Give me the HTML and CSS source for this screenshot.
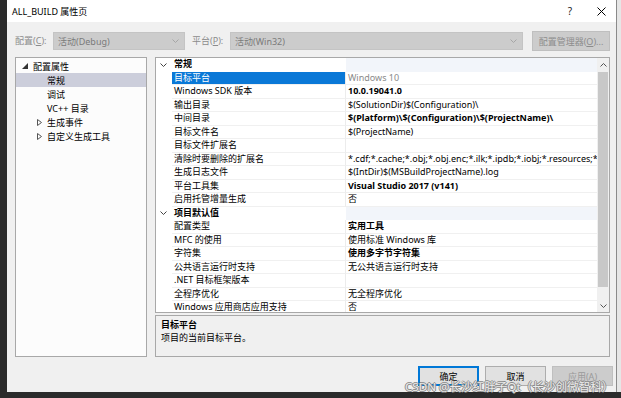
FILE: index.html
```html
<!DOCTYPE html>
<html lang="zh-CN">
<head>
  <meta charset="UTF-8">
  <title>ALL_BUILD 属性页</title>
  <link rel="stylesheet" href="styles.css">
</head>
<body>
  <div class="screen">
    <div class="dialog">
      <!-- title bar -->
      <div class="titlebar">
        <span class="title">ALL_BUILD 属性页</span>
        <span class="help">?</span>
        <svg class="close" width="9" height="9" viewBox="0 0 9 9"><path d="M0.5 0.5 L8.5 8.5 M8.5 0.5 L0.5 8.5" stroke="#000" stroke-width="1" fill="none"/></svg>
      </div>

      <!-- configuration / platform -->
      <div class="toolbar">
        <span class="tb-label">配置(<u>C</u>):</span>
        <div class="combo combo-config">
          <span>活动(Debug)</span>
          <svg width="7" height="4" viewBox="0 0 7 4"><path d="M0.5 0.5 L3.5 3.5 L6.5 0.5" stroke="#a6a6a6" fill="none"/></svg>
        </div>
        <span class="tb-label tb-label2">平台(<u>P</u>):</span>
        <div class="combo combo-platform">
          <span>活动(Win32)</span>
          <svg width="7" height="4" viewBox="0 0 7 4"><path d="M0.5 0.5 L3.5 3.5 L6.5 0.5" stroke="#a6a6a6" fill="none"/></svg>
        </div>
        <div class="btn btn-manager">配置管理器(<u>O</u>)...</div>
      </div>

      <div class="main">
        <!-- left tree -->
        <div class="tree">
          <div class="tree-row">
            <span class="twisty"><svg width="6" height="6" viewBox="0 0 6 6"><path d="M6 0 L6 6 L0 6 Z" fill="#333"/></svg></span>
            <span>配置属性</span>
          </div>
          <div class="tree-row child selected"><span class="twisty"></span><span>常规</span></div>
          <div class="tree-row child"><span class="twisty"></span><span>调试</span></div>
          <div class="tree-row child"><span class="twisty"></span><span>VC++ 目录</span></div>
          <div class="tree-row child">
            <span class="twisty"><svg width="5" height="7" viewBox="0 0 5 7"><path d="M0.5 0.5 L4.5 3.5 L0.5 6.5 Z" stroke="#555" fill="none"/></svg></span>
            <span>生成事件</span>
          </div>
          <div class="tree-row child">
            <span class="twisty"><svg width="5" height="7" viewBox="0 0 5 7"><path d="M0.5 0.5 L4.5 3.5 L0.5 6.5 Z" stroke="#555" fill="none"/></svg></span>
            <span>自定义生成工具</span>
          </div>
        </div>

        <div class="right">
          <!-- property grid -->
          <div class="grid">
            <div class="rows">
              <div class="row category">
                <span class="gutter"><svg width="7" height="4" viewBox="0 0 7 4"><path d="M0.5 0.5 L3.5 3.5 L6.5 0.5" stroke="#444" fill="none"/></svg></span>
                <span class="name">常规</span><span class="value"></span>
              </div>
              <div class="row selected"><span class="gutter"></span><span class="name">目标平台</span><span class="value dim">Windows 10</span></div>
              <div class="row"><span class="gutter"></span><span class="name">Windows SDK 版本</span><span class="value bold">10.0.19041.0</span></div>
              <div class="row"><span class="gutter"></span><span class="name">输出目录</span><span class="value">$(SolutionDir)$(Configuration)\</span></div>
              <div class="row"><span class="gutter"></span><span class="name">中间目录</span><span class="value bold">$(Platform)\$(Configuration)\$(ProjectName)\</span></div>
              <div class="row"><span class="gutter"></span><span class="name">目标文件名</span><span class="value">$(ProjectName)</span></div>
              <div class="row"><span class="gutter"></span><span class="name">目标文件扩展名</span><span class="value"></span></div>
              <div class="row"><span class="gutter"></span><span class="name">清除时要删除的扩展名</span><span class="value">*.cdf;*.cache;*.obj;*.obj.enc;*.ilk;*.ipdb;*.iobj;*.resources;*.tlb;*.tli;*.tlh;*.tmp</span></div>
              <div class="row"><span class="gutter"></span><span class="name">生成日志文件</span><span class="value">$(IntDir)$(MSBuildProjectName).log</span></div>
              <div class="row"><span class="gutter"></span><span class="name">平台工具集</span><span class="value bold">Visual Studio 2017 (v141)</span></div>
              <div class="row"><span class="gutter"></span><span class="name">启用托管增量生成</span><span class="value">否</span></div>
              <div class="row category">
                <span class="gutter"><svg width="7" height="4" viewBox="0 0 7 4"><path d="M0.5 0.5 L3.5 3.5 L6.5 0.5" stroke="#444" fill="none"/></svg></span>
                <span class="name">项目默认值</span><span class="value"></span>
              </div>
              <div class="row"><span class="gutter"></span><span class="name">配置类型</span><span class="value bold">实用工具</span></div>
              <div class="row"><span class="gutter"></span><span class="name">MFC 的使用</span><span class="value">使用标准 Windows 库</span></div>
              <div class="row"><span class="gutter"></span><span class="name">字符集</span><span class="value bold">使用多字节字符集</span></div>
              <div class="row"><span class="gutter"></span><span class="name">公共语言运行时支持</span><span class="value">无公共语言运行时支持</span></div>
              <div class="row"><span class="gutter"></span><span class="name">.NET 目标框架版本</span><span class="value"></span></div>
              <div class="row"><span class="gutter"></span><span class="name">全程序优化</span><span class="value">无全程序优化</span></div>
              <div class="row"><span class="gutter"></span><span class="name">Windows 应用商店应用支持</span><span class="value">否</span></div>
            </div>
            <div class="scrollbar">
              <div class="sb-arrow"><svg width="7" height="4" viewBox="0 0 7 4"><path d="M0.5 3.5 L3.5 0.5 L6.5 3.5" stroke="#555" fill="none"/></svg></div>
              <div class="sb-track"><div class="sb-thumb"></div></div>
              <div class="sb-arrow"><svg width="7" height="4" viewBox="0 0 7 4"><path d="M0.5 0.5 L3.5 3.5 L6.5 0.5" stroke="#555" fill="none"/></svg></div>
            </div>
          </div>

          <!-- description -->
          <div class="desc">
            <div class="desc-title">目标平台</div>
            <div>项目的当前目标平台。</div>
          </div>
        </div>
      </div>

      <div class="footer">
        <div class="btn btn-ok">确定</div>
        <div class="btn">取消</div>
        <div class="btn btn-off">应用(<u>A</u>)</div>
      </div>
    </div>
    <div class="edge"></div>
  </div>

  <div class="watermark">CSDN @长沙红胖子Qt（长沙创微智科）</div>
</body>
</html>
```

FILE: styles.css
```css
body {
  margin: 0;
  padding: 0;
  width: 621px;
  height: 398px;
  overflow: hidden;
  background-color: #2b2b2b;
  font-family: "Noto Sans", "Noto Sans CJK SC", sans-serif;
  font-size: 9px;
  color: #000;
  position: relative;
}

.screen {
  display: flex;
  height: 392px;
  padding-left: 7px;
}

.dialog {
  width: 609px;
  height: 392px;
  background-color: #f0f0f0;
  border-right: 1px solid #8a8a8a;
  display: flex;
  flex-direction: column;
}

.edge {
  flex: 1;
  background-color: #e6e6e6;
}

/* title bar */
.titlebar {
  height: 22px;
  background-color: #fff;
  display: flex;
  align-items: center;
  padding-left: 5px;
}

.title {
  flex: 1;
}

.help {
  font-size: 10px;
  margin-right: 25px;
  color: #222;
}

.close {
  margin-right: 10px;
}

/* toolbar */
.toolbar {
  height: 35px;
  box-sizing: border-box;
  padding: 10px 0 0 8px;
  display: flex;
  align-items: flex-start;
  color: #8c8c8c;
}

.tb-label {
  width: 38px;
  line-height: 18px;
}

.tb-label2 {
  margin-left: 7px;
}

.combo {
  height: 18px;
  box-sizing: border-box;
  background-color: #cccccc;
  border: 1px solid #c4c4c4;
  display: flex;
  align-items: center;
  justify-content: space-between;
  padding: 0 5px 0 4px;
  color: #7a7a7a;
}

.combo-config {
  width: 132px;
}

.combo-platform {
  width: 293px;
}

.btn {
  width: 61px;
  height: 20px;
  box-sizing: border-box;
  background-color: #e1e1e1;
  border: 1px solid #adadad;
  display: flex;
  align-items: center;
  justify-content: center;
}

.btn-manager {
  width: 78px;
  margin: -1px 0 0 9px;
  background-color: #cccccc;
  border-color: #bfbfbf;
  color: #8c8c8c;
}

/* main area */
.main {
  height: 300px;
  display: flex;
  padding-left: 8px;
  gap: 8px;
}

.tree {
  width: 132px;
  box-sizing: border-box;
  border: 1px solid #a8a8a8;
  background-color: #fcfcfc;
  padding-top: 1px;
}

.tree-row {
  height: 14px;
  display: flex;
  align-items: center;
  padding-left: 6px;
}

.tree-row.child {
  padding-left: 21px;
}

.tree-row.selected {
  background-color: #cccedb;
}

.twisty {
  width: 11px;
  display: flex;
  align-items: center;
}

.child .twisty {
  width: 10px;
}

.right {
  width: 455px;
  display: flex;
  flex-direction: column;
  gap: 2px;
}

/* property grid */
.grid {
  height: 256px;
  box-sizing: border-box;
  border: 1px solid #a8a8a8;
  background-color: #fff;
  display: flex;
  overflow: hidden;
}

.rows {
  flex: 1;
  overflow: hidden;
}

.row {
  height: 13.5px;
  display: flex;
  white-space: nowrap;
}

.gutter {
  width: 16px;
  flex: none;
  display: flex;
  align-items: center;
  padding-left: 4px;
  box-sizing: border-box;
}

.name {
  width: 174px;
  flex: none;
  box-sizing: border-box;
  padding-left: 2px;
  border-right: 1px solid #ececec;
  border-bottom: 1px solid #f0f0f0;
  line-height: 12.5px;
  overflow: hidden;
}

.value {
  flex: 1;
  padding-left: 2px;
  border-bottom: 1px solid #f0f0f0;
  line-height: 12.5px;
  overflow: hidden;
}

.row.category .name {
  font-weight: bold;
  border-right: none;
  border-bottom: none;
}

.row.category .value {
  background-color: #f2f5fa;
  border-bottom: none;
}

.row.selected .name {
  background-color: #0a78d7;
  color: #fff;
}

.dim {
  color: #8a8a8a;
}

.bold {
  font-weight: bold;
}

.scrollbar {
  width: 12px;
  flex: none;
  background-color: #f0f0f0;
  display: flex;
  flex-direction: column;
}

.sb-arrow {
  height: 13px;
  display: flex;
  align-items: center;
  justify-content: center;
}

.sb-track {
  flex: 1;
  padding: 1px 1px 0 1px;
}

.sb-thumb {
  height: 215px;
  background-color: #c8c8c8;
}

/* description */
.desc {
  height: 42px;
  box-sizing: border-box;
  border: 1px solid #a8a8a8;
  background-color: #f0f0f0;
  padding: 2px 0 0 5px;
  line-height: 13px;
}

.desc-title {
  font-weight: bold;
}

/* footer */
.footer {
  display: flex;
  justify-content: flex-end;
  gap: 6px;
  padding: 9px 3px 0 0;
}

.btn-ok {
  border: 2px solid #0078d7;
}

.btn-off {
  background-color: #cccccc;
  border-color: #bfbfbf;
  color: #9a9a9a;
}

.watermark {
  position: absolute;
  left: 405px;
  top: 378px;
  font-size: 11.6px;
  color: rgba(255, 255, 255, 0.85);
  text-shadow: 1px 0 0 #8a8a8a, -1px 0 0 #8a8a8a, 0 1px 0 #8a8a8a, 0 -1px 0 #8a8a8a;
  white-space: nowrap;
}
```
